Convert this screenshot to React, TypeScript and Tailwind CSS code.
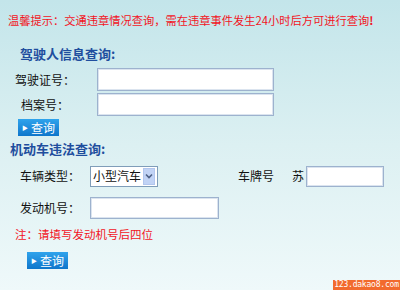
export default function App() {
  const input = 'bg-white border border-[#9db2ce] shadow-[inset_0_0_0_1px_#dbe4ef]'
  const btn =
    'flex items-center justify-center gap-[3px] w-[41px] h-[17px] bg-gradient-to-b from-[#2fa3ec] to-[#0e76cb] text-white text-[12px] leading-none'
  return (
    <div className="relative w-[400px] h-[290px] overflow-hidden bg-gradient-to-b from-[#c3e5ea] via-[#dcf0f2] to-[#eff9fa] font-['Noto_Sans_CJK_SC',sans-serif] text-[12px] text-[#111]">
      <p className="pt-[13px] pl-[8px] leading-[14px] text-[11.25px] text-[#f2141e] whitespace-nowrap">
        温馨提示：交通违章情况查询，需在违章事件发生24小时后方可进行查询<span className="font-bold">!</span>
      </p>

      <h2 className="mt-[20px] pl-[20px] text-[13px] font-bold leading-[14px] text-[#1f4e9e]">驾驶人信息查询:</h2>

      <div className="mt-[7px] flex items-center h-[23px]">
        <span className="pl-[15px] w-[97px]">驾驶证号：</span>
        <div className={`${input} w-[177px] h-[23px]`} />
      </div>
      <div className="mt-[2px] flex items-center h-[23px]">
        <span className="pl-[21px] w-[97px]">档案号：</span>
        <div className={`${input} w-[177px] h-[23px]`} />
      </div>

      <div className="mt-[3px] ml-[18px]">
        <button className={btn}>
          <span className="text-[6px]">▶</span>
          <span>查询</span>
        </button>
      </div>

      <h2 className="mt-[6px] pl-[10px] text-[13px] font-bold leading-[14px] text-[#1f4e9e]">机动车违法查询:</h2>

      <div className="mt-[9px] flex items-center h-[22px]">
        <span className="pl-[20px] w-[90px]">车辆类型：</span>
        <div className="flex items-center w-[68px] h-[21px] bg-white border border-[#7f9db9] pl-[2px] pr-[2px]">
          <span className="flex-1 text-[12px] leading-none whitespace-nowrap">小型汽车</span>
          <span className="flex items-center justify-center w-[12px] h-[17px] bg-[#c1d3f5] border border-[#b2c6ee]">
            <svg width="8" height="6" viewBox="0 0 8 6">
              <path d="M1 1.5 L4 4.5 L7 1.5" fill="none" stroke="#4d6185" strokeWidth="1.6" />
            </svg>
          </span>
        </div>
        <span className="ml-[80px]">车牌号</span>
        <span className="ml-[18px]">苏</span>
        <div className={`${input} ml-[2px] w-[78px] h-[21px]`} />
      </div>

      <div className="mt-[10px] flex items-center h-[22px]">
        <span className="pl-[20px] w-[90px]">发动机号：</span>
        <div className={`${input} w-[129px] h-[22px]`} />
      </div>

      <p className="mt-[8px] pl-[15px] leading-[14px] text-[11.5px] text-[#f2141e]">注：请填写发动机号后四位</p>

      <div className="mt-[11px] ml-[27px]">
        <button className={btn}>
          <span className="text-[6px]">▶</span>
          <span>查询</span>
        </button>
      </div>

      <div className="absolute right-0 bottom-0 w-[67px] h-[10px] bg-[#f26a2e] text-white text-[8px] leading-[10px] text-center tracking-tight font-['DejaVu_Sans_Mono',monospace] whitespace-nowrap">
        123.dakao8.com
      </div>
    </div>
  )
}
